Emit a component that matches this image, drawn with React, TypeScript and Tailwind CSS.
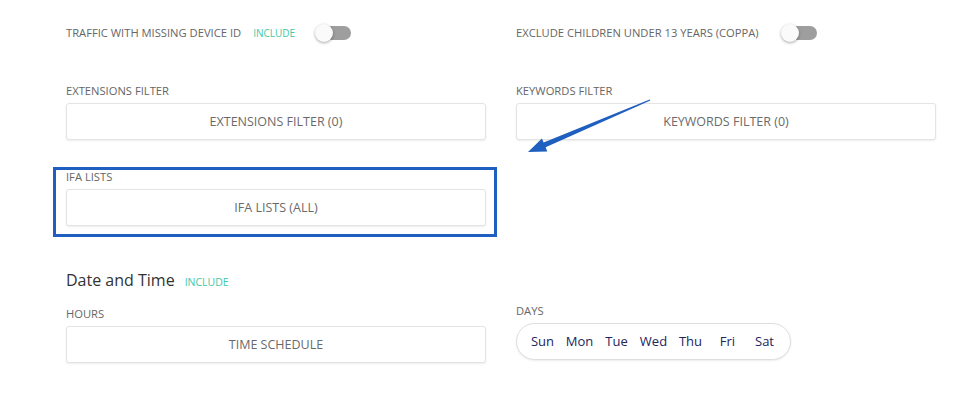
import React from "react";

const Toggle = () => (
  <div className="relative w-[36px] h-[18px] flex items-center">
    <div className="absolute left-[2px] right-0 h-[14px] rounded-full bg-[#9e9e9e]" />
    <div className="absolute left-0 top-0 w-[18px] h-[18px] rounded-full bg-[#fafafa] shadow-[0_1px_3px_rgba(0,0,0,0.35)]" />
  </div>
);

const Label = ({ children }: { children: React.ReactNode }) => (
  <div className="text-[11.2px] leading-[14px] uppercase text-[#666]">{children}</div>
);

const Box = ({ children }: { children: React.ReactNode }) => (
  <div className="h-[37px] flex items-center justify-center rounded-[3px] border border-[#e4e4e4] bg-white shadow-[0_1px_2px_rgba(0,0,0,0.08)] text-[12.5px] uppercase text-[#6a6a6a]">
    <span className="translate-y-[1px]">{children}</span>
  </div>
);

export default function App() {
  const days = ["Sun", "Mon", "Tue", "Wed", "Thu", "Fri", "Sat"];
  return (
    <div
      className="relative w-[955px] h-[396px] bg-white overflow-hidden"
      style={{ fontFamily: '"Open Sans", "Noto Sans", sans-serif' }}
    >
      <div className="pl-[66px] pr-[19px] pt-[24px] grid grid-cols-[420px_420px] gap-x-[30px]">
        {/* Row 1 toggles */}
        <div className="flex items-center h-[18px]">
          <span className="text-[11.2px] uppercase text-[#666]">Traffic with missing device ID</span>
          <span className="ml-[12px] text-[10px] uppercase text-[#3fc8a6]">Include</span>
          <div className="ml-[20px]">
            <Toggle />
          </div>
        </div>
        <div className="flex items-center h-[18px]">
          <span className="text-[11.2px] uppercase text-[#666]">Exclude children under 13 years (COPPA)</span>
          <div className="ml-[22px]">
            <Toggle />
          </div>
        </div>

        {/* Row 2 */}
        <div className="mt-[42px]">
          <Label>Extensions filter</Label>
          <div className="mt-[5px]">
            <Box>Extensions filter (0)</Box>
          </div>
        </div>
        <div className="mt-[42px]">
          <Label>Keywords filter</Label>
          <div className="mt-[5px]">
            <Box>Keywords filter (0)</Box>
          </div>
        </div>

        {/* Row 3 */}
        <div className="relative mt-[30px]">
          <Label>IFA lists</Label>
          <div className="mt-[5px]">
            <Box>IFA lists (All)</Box>
          </div>
          <div className="absolute left-[-13px] top-[-3px] w-[444px] h-[70px] border-[3px] border-[#1f5fc0]" />
        </div>
        <div />

        {/* Date and time heading */}
        <div className="col-span-2 mt-[42px] flex items-baseline h-[24px]">
          <span className="text-[16px] leading-[24px] text-[#333]">Date and Time</span>
          <span className="ml-[10px] text-[10.5px] uppercase text-[#3fc8a6]">Include</span>
        </div>

        {/* Row 4 */}
        <div className="mt-[15px]">
          <Label>Hours</Label>
          <div className="mt-[5px]">
            <Box>Time schedule</Box>
          </div>
        </div>
        <div className="mt-[12px]">
          <Label>Days</Label>
          <div className="mt-[5px] inline-flex items-center h-[37px] px-[7px] rounded-full border border-[#dedede] bg-white shadow-[0_1px_2px_rgba(0,0,0,0.08)]">
            {days.map((d) => (
              <span key={d} className="w-[37px] text-center text-[13px] text-[#22245e]">
                {d}
              </span>
            ))}
          </div>
        </div>
      </div>

      {/* Annotation arrow */}
      <svg className="absolute left-0 top-0 pointer-events-none" width="955" height="396">
        <polygon
          points="650.3,100.6 545.6,147.2 547.3,151.4 528,152 541.9,138.5 543.6,142.6 649.7,99.4"
          fill="#1f5fc0"
        />
      </svg>
    </div>
  );
}
